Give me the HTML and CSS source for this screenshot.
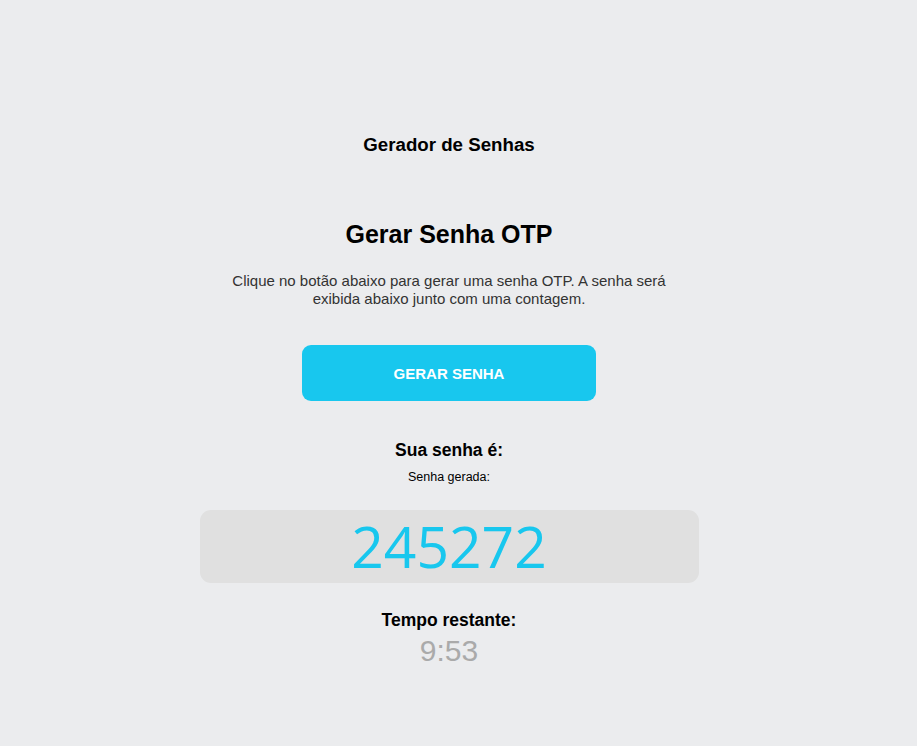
FILE: index.html
```html
<!DOCTYPE html>
<html lang="pt-BR">
<head>
<meta charset="utf-8">
<title>Gerador de Senhas</title>
<link rel="stylesheet" href="styles.css">
</head>
<body>
<main class="page">
  <h1 class="app-title">Gerador de Senhas</h1>
  <section class="card">
    <h2 class="card-title">Gerar Senha OTP</h2>
    <p class="intro">Clique no botão abaixo para gerar uma senha OTP. A senha será exibida abaixo junto com uma contagem.</p>
    <button class="btn" type="button">GERAR SENHA</button>
    <h3 class="label">Sua senha é:</h3>
    <p class="sublabel">Senha gerada:</p>
    <div class="otp-box"><span class="otp">245272</span></div>
    <h3 class="label timer-label">Tempo restante:</h3>
    <div class="timer">9:53</div>
  </section>
</main>
</body>
</html>
```

FILE: styles.css
```css
html, body {
  margin: 0;
  padding: 0;
  background: #ebecee;
}
body {
  font-family: "Liberation Sans", Arial, sans-serif;
  color: #000;
  min-height: 746px;
}
.page {
  width: 898px;
  display: flex;
  flex-direction: column;
  align-items: center;
  padding-top: 133px;
}
.app-title {
  margin: 0;
  font-size: 18.7px;
  font-weight: bold;
  line-height: 24px;
}
.card {
  width: 499px;
  display: flex;
  flex-direction: column;
  align-items: center;
  margin-top: 62px;
}
.card-title {
  margin: 0;
  font-size: 25px;
  font-weight: bold;
  line-height: 30px;
}
.intro {
  margin: 23px 0 0;
  width: 450px;
  font-size: 15px;
  line-height: 18px;
  color: #333;
  text-align: center;
}
.btn {
  margin-top: 37px;
  width: 294px;
  height: 56px;
  border: none;
  border-radius: 9px;
  background: #18c7ee;
  color: #fff;
  font-family: "Liberation Sans", Arial, sans-serif;
  font-size: 15px;
  font-weight: bold;
}
.label {
  margin: 39px 0 0;
  font-size: 17.5px;
  font-weight: bold;
  line-height: 20px;
}
.sublabel {
  margin: 9px 0 0;
  font-size: 12.5px;
  line-height: 16px;
}
.otp-box {
  margin-top: 25px;
  width: 499px;
  height: 73px;
  border-radius: 11px;
  background: #e0e0e0;
  display: flex;
  align-items: center;
  justify-content: center;
}
.otp {
  font-family: "Open Sans", "Noto Sans", sans-serif;
  font-size: 57px;
  line-height: 73px;
  color: #18c7ee;
}
.timer-label {
  margin-top: 27px;
}
.timer {
  margin-top: 3px;
  font-size: 30px;
  line-height: 36px;
  color: #aaaaaa;
}
```
